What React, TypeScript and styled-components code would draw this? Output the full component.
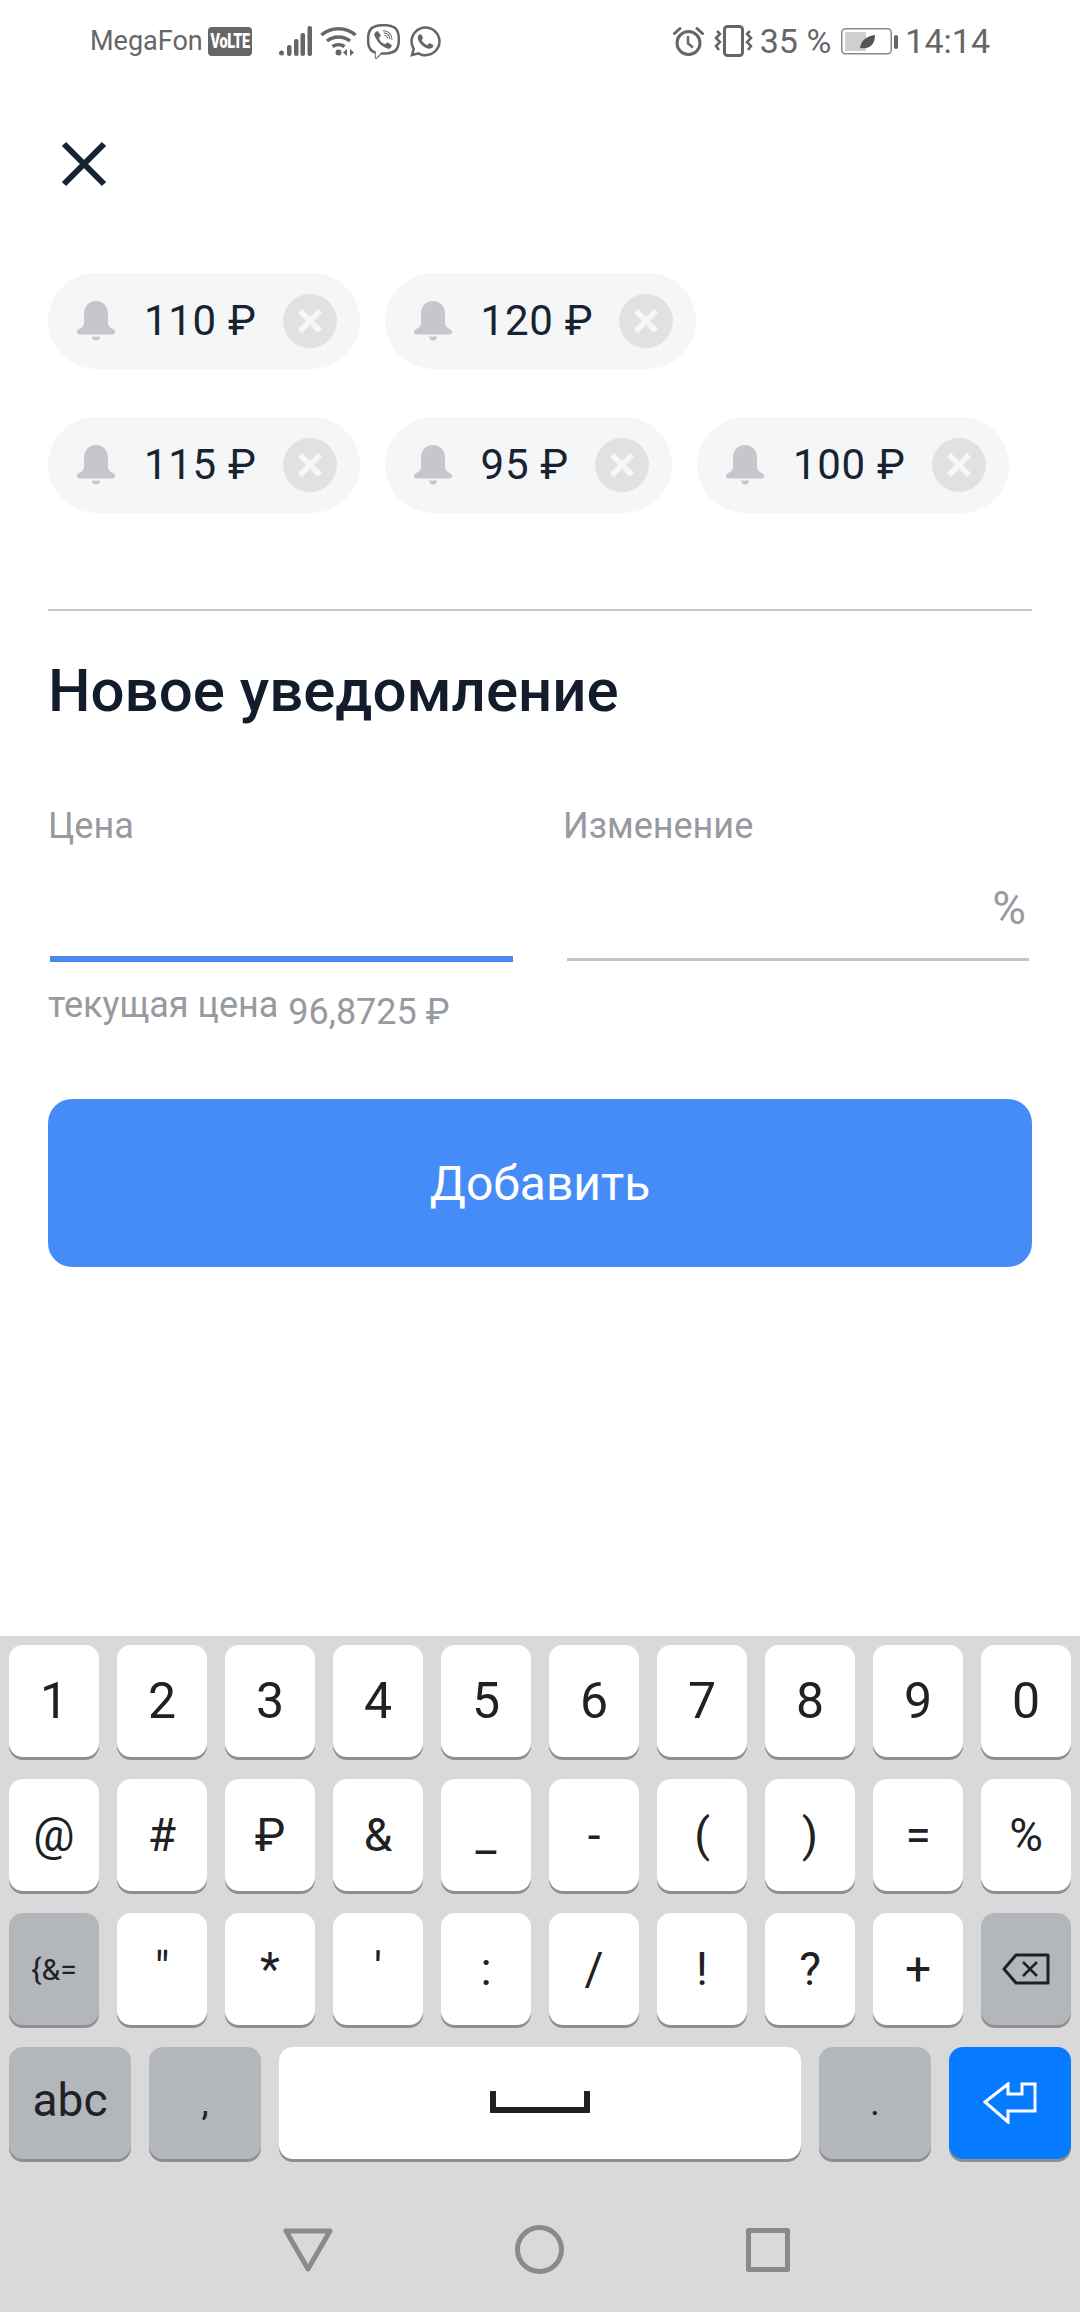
import React from "react";
import styled, { createGlobalStyle } from "styled-components";
import { FaViber, FaWhatsapp } from "react-icons/fa";

const GlobalStyle = createGlobalStyle`
  html, body {
    margin: 0;
    padding: 0;
    background: #fff;
  }
  * {
    box-sizing: border-box;
  }
`;

const Screen = styled.div`
  width: 1080px;
  height: 2312px;
  display: flex;
  flex-direction: column;
  overflow: hidden;
  font-family: Roboto, "Liberation Sans", sans-serif;
  background: #fff;
`;

const StatusBar = styled.div`
  height: 82px;
  padding: 0 90px;
  display: flex;
  align-items: center;
  justify-content: space-between;
  color: #666;
`;

const StatusGroup = styled.div`
  display: flex;
  align-items: center;
`;

const Carrier = styled.span`
  font-size: 27px;
  line-height: 32px;
  margin-right: 5px;
`;

const Volte = styled.span`
  width: 44px;
  height: 29px;
  border-radius: 4px;
  background: #666;
  color: #fff;
  display: flex;
  align-items: center;
  justify-content: center;
  margin-right: 27px;
`;

const VolteText = styled.span`
  font-size: 20px;
  font-weight: 900;
  letter-spacing: -0.5px;
  transform: scaleX(0.72);
  white-space: nowrap;
`;

const StatusText = styled.span<{ $gap?: number }>`
  font-size: 34px;
  line-height: 36px;
  margin-right: ${(p) => p.$gap ?? 0}px;
`;

const StatusIcon = styled.svg<{ $gap?: number }>`
  display: block;
  margin-right: ${(p) => p.$gap ?? 0}px;
  flex: none;
`;

const BrandIcon = styled.span<{ $gap?: number }>`
  display: flex;
  font-size: 35px;
  margin-right: ${(p) => p.$gap ?? 0}px;
`;

const Content = styled.div`
  padding: 59px 48px 0;
  display: flex;
  flex-direction: column;
`;

const CloseButton = styled.div`
  width: 46px;
  height: 46px;
  margin-left: 13px;
  margin-bottom: 86px;
`;

const ChipRow = styled.div`
  display: flex;
  gap: 25px;
  margin-bottom: 48px;
`;

const Chip = styled.div`
  height: 96px;
  padding: 0 23px 0 29px;
  border-radius: 48px;
  background: #f4f6f8;
  display: flex;
  align-items: center;
`;

const ChipPrice = styled.span`
  margin: 0 26px 0 29px;
  font-size: 42px;
  line-height: 50px;
  letter-spacing: 0.7px;
  color: #182230;
  white-space: nowrap;
`;

const ChipRemove = styled.div`
  width: 54px;
  height: 54px;
  border-radius: 50%;
  background: #dfe1e3;
  display: flex;
  align-items: center;
  justify-content: center;
`;

const Divider = styled.div`
  height: 2px;
  background: #c6c6c6;
  margin-top: 48px;
`;

const Title = styled.h1`
  margin: 45px 0 0;
  font-size: 60px;
  line-height: 70px;
  font-weight: 500;
  color: #131c2b;
`;

const Fields = styled.div`
  display: grid;
  grid-template-columns: 1fr 1fr;
  column-gap: 46px;
  margin-top: 78px;
`;

const FieldLabel = styled.div`
  font-size: 36px;
  line-height: 44px;
  color: #979a9f;
`;

const FieldInput = styled.div`
  height: 108px;
  padding: 0 6px 16px 0;
  display: flex;
  align-items: flex-end;
  justify-content: flex-end;
  font-size: 46px;
  line-height: 64px;
  color: #979a9f;
`;

const Underline = styled.div<{ $active?: boolean }>`
  height: ${(p) => (p.$active ? 6 : 3)}px;
  margin: ${(p) => (p.$active ? "0 4px 0 2px" : "2px 3px 1px 4px")};
  background: ${(p) => (p.$active ? "#4a8af0" : "#c4c4c4")};
`;

const Hint = styled.div`
  margin-top: 23px;
  display: flex;
  align-items: flex-start;
  gap: 10px;
  color: #979a9f;
`;

const HintLabel = styled.span`
  font-size: 36px;
  line-height: 40px;
`;

const HintValue = styled.span`
  font-size: 36px;
  line-height: 40px;
  margin-top: 7px;
`;

const AddButton = styled.div`
  height: 168px;
  margin-top: 67px;
  border-radius: 24px;
  background: #468cf8;
  color: #fff;
  font-size: 48px;
  display: flex;
  align-items: center;
  justify-content: center;
`;

const Keyboard = styled.div`
  margin-top: auto;
  height: 676px;
  padding: 9px 9px 0;
  background: #d9d9d9;
  display: flex;
  flex-direction: column;
`;

const KeyRow = styled.div`
  display: flex;
  gap: 18px;
  margin-bottom: 22px;
`;

const Key = styled.div<{
  $tone?: "light" | "muted" | "accent";
  $width?: number;
  $size?: number;
  $lift?: number;
}>`
  width: ${(p) => p.$width ?? 90}px;
  height: 112px;
  flex: none;
  padding-bottom: ${(p) => p.$lift ?? 0}px;
  border-radius: 14px;
  background: ${(p) =>
    p.$tone === "muted" ? "#b3b6bb" : p.$tone === "accent" ? "#077bff" : "#fff"};
  box-shadow: 0 3px 0 #8f8f8f;
  color: #202124;
  font-size: ${(p) => p.$size ?? 48}px;
  display: flex;
  align-items: center;
  justify-content: center;
`;

const NavBar = styled.div`
  flex: 1;
  margin-top: -22px;
  padding: 28px 8px 0 0;
  display: flex;
  align-items: center;
  justify-content: center;
  gap: 182px;
`;

const row1 = ["1", "2", "3", "4", "5", "6", "7", "8", "9", "0"];
const row2 = ["@", "#", "₽", "&", "_", "-", "(", ")", "=", "%"];
const row3 = ['"', "*", "'", ":", "/", "!", "?", "+"];
const alerts = [["110 ₽", "120 ₽"], ["115 ₽", "95 ₽", "100 ₽"]];

const Bell = () => (
  <svg width="38" height="40" viewBox="0 0 38 40" fill="#c5c7ca">
    <path d="M19 0c-7.500 0-12 5.500-12 13v9c0 3-2 4.500-5.500 6.500C0 29.300 0 30 0 31c0 1.500 1 2.500 2.500 2.500h33c1.500 0 2.500-1 2.500-2.500 0-1-.2-1.700-1.500-2.500C33 26.500 31 25 31 22v-9C31 5.500 26.500 0 19 0z" />
    <path d="M15 35.500h8c0 2.500-1.800 4-4 4s-4-1.500-4-4z" />
  </svg>
);

const RemoveCross = () => (
  <svg width="26" height="26" viewBox="0 0 26 26" stroke="#f6f7f8" strokeWidth="5.500">
    <path d="M3 3l20 20M23 3L3 23" />
  </svg>
);

const Alert = ({ price }: { price: string }) => (
  <Chip>
    <Bell />
    <ChipPrice>{price}</ChipPrice>
    <ChipRemove>
      <RemoveCross />
    </ChipRemove>
  </Chip>
);

const App = () => (
  <Screen>
    <GlobalStyle />
    <StatusBar>
      <StatusGroup>
        <Carrier>MegaFon</Carrier>
        <Volte>
          <VolteText>VoLTE</VolteText>
        </Volte>
        <StatusIcon $gap={8} width="33" height="30" viewBox="0 0 33 30" fill="#666">
          <circle cx="2.500" cy="27" r="2.500" />
          <rect x="8" y="19" width="4.500" height="11" rx="2" />
          <rect x="15" y="13" width="4.500" height="17" rx="2" />
          <rect x="21.500" y="7" width="4.500" height="23" rx="2" />
          <rect x="28.500" y="0" width="4.500" height="30" rx="2" />
        </StatusIcon>
        <StatusIcon $gap={9} width="37" height="30" viewBox="0 0 37 30" fill="none" stroke="#666" strokeWidth="3.500">
          <path d="M1.500 9C11 .5 26 .5 35.500 9" />
          <path d="M7 15c6.500-5.500 16.500-5.500 23 0" />
          <path d="M12.500 20.500c3.500-2.500 8.500-2.500 12 0" />
          <circle cx="18.500" cy="26.500" r="3" fill="#666" stroke="none" />
          <path d="M27 23v7l-4-3.500zM30 23v7l4-3.500z" fill="#666" stroke="none" />
        </StatusIcon>
        <BrandIcon $gap={7}>
          <FaViber />
        </BrandIcon>
        <BrandIcon>
          <FaWhatsapp />
        </BrandIcon>
      </StatusGroup>
      <StatusGroup>
        <StatusIcon $gap={9} width="31" height="31" viewBox="0 0 31 31" fill="none" stroke="#666" strokeWidth="3">
          <circle cx="15.500" cy="17" r="11.500" />
          <path d="M15 10v7.500l5 4" strokeWidth="2.500" />
          <path d="M1.500 7.500L7 2.500M29.500 7.500L24 2.500" strokeLinecap="round" />
        </StatusIcon>
        <StatusIcon $gap={6} width="41" height="32" viewBox="0 0 41 32" fill="none" stroke="#666">
          <rect x="11.500" y="1.500" width="18" height="29" rx="3" strokeWidth="3" />
          <path d="M4 6l3 3-4 4 4 4-4 4 3 4M37 6l-3 3 4 4-4 4 4 4-3 4" strokeWidth="2.500" />
        </StatusIcon>
        <StatusText $gap={10}>35 %</StatusText>
        <StatusIcon $gap={7} width="57" height="28" viewBox="0 0 57 28">
          <rect x=".75" y="1.750" width="49.500" height="25" rx="3.500" fill="#fff" stroke="#8a8a8a" strokeWidth="1.500" />
          <rect x="4" y="5" width="21" height="19" fill="#cfcfcf" />
          <path d="M19 21c1-8 7-12 15-13 0 7-3 12-9 13-2 .3-4 .3-6 0z" fill="#555" />
          <rect x="53" y="8" width="4" height="14" rx="2" fill="#666" />
        </StatusIcon>
        <StatusText>14:14</StatusText>
      </StatusGroup>
    </StatusBar>

    <Content>
      <CloseButton>
        <svg width="46" height="46" viewBox="0 0 46 46" stroke="#172230" strokeWidth="6">
          <path d="M3 3l40 40M43 3L3 43" />
        </svg>
      </CloseButton>
      {alerts.map((prices) => (
        <ChipRow key={prices[0]}>
          {prices.map((price) => (
            <Alert key={price} price={price} />
          ))}
        </ChipRow>
      ))}
      <Divider />
      <Title>Новое уведомление</Title>
      <Fields>
        <div>
          <FieldLabel>Цена</FieldLabel>
          <FieldInput />
          <Underline $active />
        </div>
        <div>
          <FieldLabel>Изменение</FieldLabel>
          <FieldInput>%</FieldInput>
          <Underline />
        </div>
      </Fields>
      <Hint>
        <HintLabel>текущая цена</HintLabel>
        <HintValue>96,8725 ₽</HintValue>
      </Hint>
      <AddButton>Добавить</AddButton>
    </Content>

    <Keyboard>
      <KeyRow>
        {row1.map((k) => (
          <Key key={k} $size={50}>{k}</Key>
        ))}
      </KeyRow>
      <KeyRow>
        {row2.map((k) => (
          <Key key={k} $size={46}>{k}</Key>
        ))}
      </KeyRow>
      <KeyRow>
        <Key $tone="muted" $size={30}>{"{&="}</Key>
        {row3.map((k) => (
          <Key key={k} $size={46}>{k}</Key>
        ))}
        <Key $tone="muted">
          <svg width="48" height="32" viewBox="0 0 48 32" fill="none" stroke="#202124" strokeWidth="3" strokeLinejoin="round">
            <path d="M14 2h32v28H14L2 16z" />
            <path d="M21 9l14 14M35 9L21 23" strokeWidth="2.500" />
          </svg>
        </Key>
      </KeyRow>
      <KeyRow>
        <Key $tone="muted" $width={122} $size={46} $lift={6}>abc</Key>
        <Key $tone="muted" $width={112} $size={36}>,</Key>
        <Key $width={522}>
          <svg width="100" height="24" viewBox="0 0 100 24" fill="none" stroke="#202124" strokeWidth="6">
            <path d="M3 0v19h94V0" />
          </svg>
        </Key>
        <Key $tone="muted" $width={112} $size={36}>.</Key>
        <Key $tone="accent" $width={122}>
          <svg width="54" height="42" viewBox="0 0 54 42" fill="none" stroke="#fff" strokeWidth="3">
            <path d="M2 20L25 2v10h14V2h13v27H25v11z" />
          </svg>
        </Key>
      </KeyRow>
      <NavBar>
        <svg width="50" height="44" viewBox="0 0 50 44" fill="none" stroke="#8a8a8a" strokeWidth="5" strokeLinejoin="round">
          <path d="M3 3h44L25 41z" />
        </svg>
        <svg width="49" height="49" viewBox="0 0 49 49" fill="none" stroke="#8a8a8a" strokeWidth="5">
          <circle cx="24.500" cy="24.500" r="22" />
        </svg>
        <svg width="44" height="44" viewBox="0 0 44 44" fill="none" stroke="#8a8a8a" strokeWidth="5" strokeLinejoin="round">
          <rect x="2.500" y="2.500" width="39" height="39" />
        </svg>
      </NavBar>
    </Keyboard>
  </Screen>
);

export default App;
